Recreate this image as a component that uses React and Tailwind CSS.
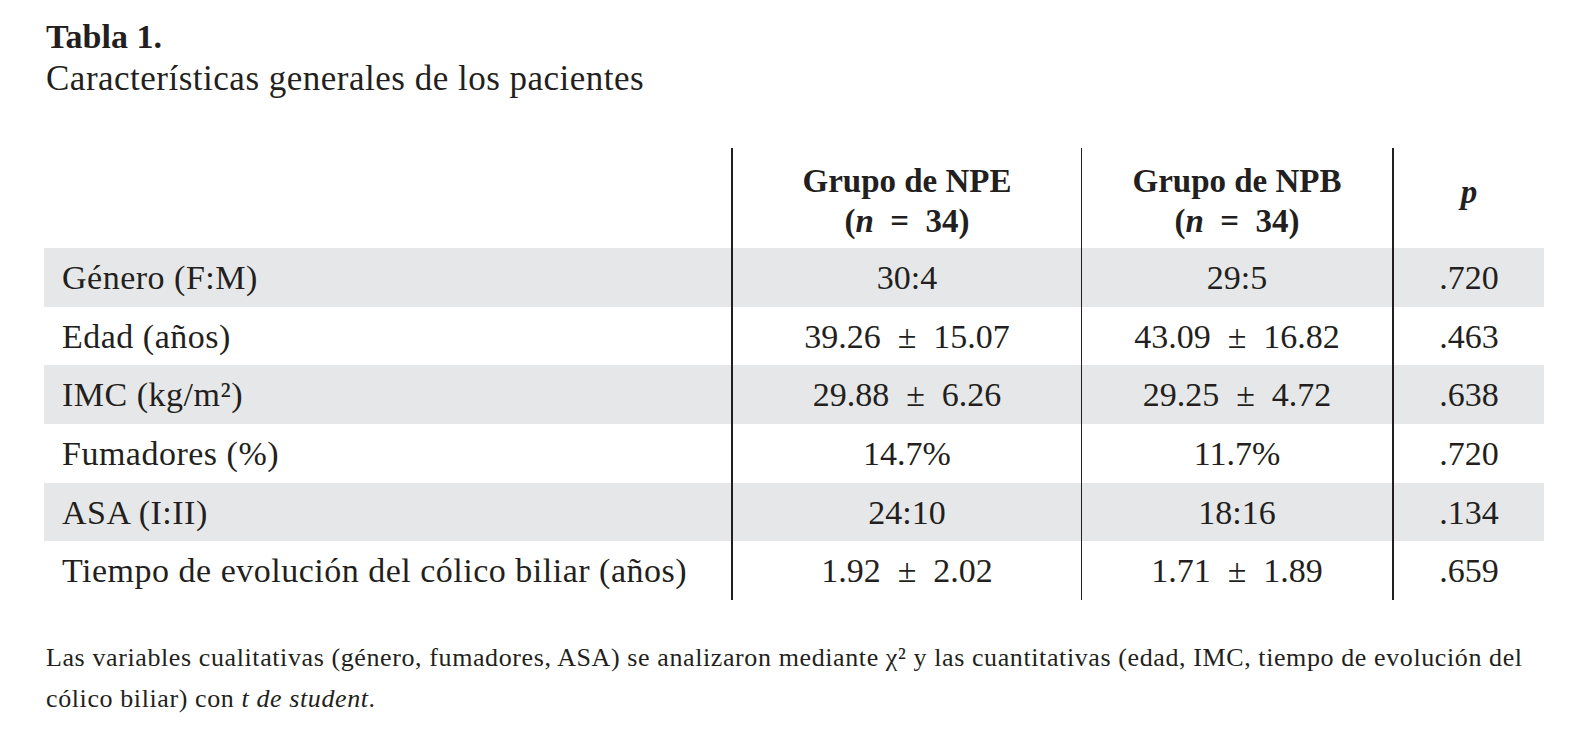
import React from 'react'

const rows = [
    {label: "Género (F:M)", a: "30:4", b: "29:5", p: ".720", shade: true},
    {label: "Edad (años)", a: "39.26\u2002±\u200215.07", b: "43.09\u2002±\u200216.82", p: ".463"},
    {label: <>IMC (kg/m²)</>, a: "29.88\u2002±\u20026.26", b: "29.25\u2002±\u20024.72", p: ".638", shade: true},
    {label: "Fumadores (%)", a: "14.7%", b: "11.7%", p: ".720"},
    {label: "ASA (I:II)", a: "24:10", b: "18:16", p: ".134", shade: true},
    {label: "Tiempo de evolución del cólico biliar (años)", a: "1.92\u2002±\u20022.02", b: "1.71\u2002±\u20021.89", p: ".659"},
]

function GroupHead({name}) {
    return (
        <div className="h-full flex flex-col items-center justify-center pt-[6px] font-bold text-[33px] leading-[40px]">
            <p>{name}</p>
            <p>(<span className="italic">n</span>{"\u2002=\u2002"}34)</p>
        </div>
    )
}

export default function App() {
    return (
        <div className="w-[1579px] h-[729px] bg-white text-[#231f20] font-['Liberation_Serif',serif] overflow-hidden">
            <div className="pt-[18px] pl-[46px]">
                <h1 className="font-bold text-[34px] leading-[38px]">Tabla 1.</h1>
                <h2 className="text-[35px] tracking-[0.5px] leading-[42px] mt-[2px]">Características generales de los pacientes</h2>
            </div>

            <div className="ml-[44px] mt-[48px] grid grid-cols-[687px_350px_311px_152px] text-[34px]">
                <div className="h-[100px]"></div>
                <div className="border-l-2 border-[#231f20]">
                    <GroupHead name="Grupo de NPE"/>
                </div>
                <div className="border-l border-[#231f20]">
                    <GroupHead name="Grupo de NPB"/>
                </div>
                <div className="border-l-2 border-[#231f20] flex items-center justify-center pb-[12px] font-bold italic text-[33px] leading-[40px]">
                    p
                </div>

                {rows.map((r, i) => {
                    const bg = r.shade ? "bg-[#e6e7e8]" : ""
                    return (
                        <React.Fragment key={i}>
                            <div className={`${bg} h-[58.67px] leading-[60px] pl-[18px] tracking-[0.5px] whitespace-nowrap`}>{r.label}</div>
                            <div className={`${bg} h-[58.67px] border-l-2 border-[#231f20] leading-[60px] text-center whitespace-nowrap`}>{r.a}</div>
                            <div className={`${bg} h-[58.67px] border-l border-[#231f20] leading-[60px] text-center whitespace-nowrap`}>{r.b}</div>
                            <div className={`${bg} h-[58.67px] border-l-2 border-[#231f20] leading-[60px] text-center whitespace-nowrap`}>{r.p}</div>
                        </React.Fragment>
                    )
                })}
            </div>

            <div className="ml-[46px] mt-[38px] text-[26px] tracking-[0.6px] leading-[40.6px]">
                <p className="whitespace-nowrap">
                    Las variables cualitativas (género, fumadores, ASA) se analizaron mediante χ² y las cuantitativas (edad, IMC, tiempo de evolución del
                </p>
                <p className="whitespace-nowrap">
                    cólico biliar) con <span className="italic">t de student</span>.
                </p>
            </div>
        </div>
    )
}
